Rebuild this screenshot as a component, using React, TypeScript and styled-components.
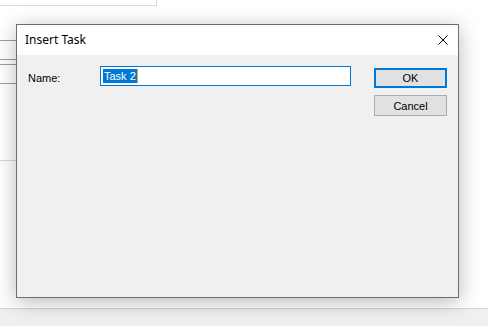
import React from "react";
import styled, {createGlobalStyle} from "styled-components";

const GlobalStyle = createGlobalStyle`
  html, body {
    margin: 0;
    padding: 0;
    background: #ffffff;
  }
`;

const Page = styled.div`
  position: relative;
  display: flex;
  flex-direction: column;
  width: 488px;
  height: 326px;
  overflow: hidden;
  background: #ffffff;
`;

const TopPanel = styled.div`
  width: 156px;
  height: 5px;
  border-right: 1px solid #dadada;
  border-bottom: 1px solid #dadada;
`;

const Rule = styled.div<{ $gap: number; $light?: boolean }>`
  width: 240px;
  margin-top: ${(p) => p.$gap}px;
  border-top: 1px solid ${(p) => (p.$light ? "#d6d6d6" : "#a0a0a0")};
`;

const Filler = styled.div`
  flex: 1;
`;

const StatusBar = styled.div`
  height: 17px;
  border-top: 1px solid #d4d4d4;
  background: #f0f0f0;
`;

const Dialog = styled.div`
  position: absolute;
  left: 16px;
  top: 24px;
  width: 443px;
  height: 274px;
  box-sizing: border-box;
  border: 1px solid #6e6e6e;
  background: #f0f0f0;
  box-shadow: 0 4px 20px rgba(0, 0, 0, 0.28);
  display: flex;
  flex-direction: column;
`;

const TitleBar = styled.div`
  height: 30px;
  background: #ffffff;
  display: flex;
  align-items: center;
  justify-content: space-between;
  padding: 0 10px 0 8px;
  font-family: "Noto Sans", "Open Sans", sans-serif;
  font-size: 12px;
  color: #000000;
`;

const Title = styled.span`
  padding-bottom: 1px;
`;

const CloseIcon = styled.svg`
  width: 10px;
  height: 10px;
  display: block;
`;

const Body = styled.div`
  flex: 1;
  display: flex;
  padding: 11px 11px 0 11px;
  font-family: "Liberation Sans", Arial, sans-serif;
  font-size: 11px;
  color: #000000;
`;

const FieldRow = styled.div`
  display: flex;
  align-items: flex-start;
`;

const Label = styled.label`
  width: 72px;
  line-height: 20px;
  padding-top: 2px;
`;

const TextBox = styled.div`
  width: 251px;
  height: 20px;
  box-sizing: border-box;
  border: 1px solid #0078d7;
  background: #ffffff;
  display: flex;
  align-items: center;
  padding-left: 2px;
`;

const Selection = styled.span`
  background: #0078d7;
  color: #ffffff;
  line-height: 14px;
  padding: 0 1px;
`;

const Caret = styled.span`
  width: 1px;
  height: 14px;
  background: #f7a030;
`;

const ButtonColumn = styled.div`
  display: flex;
  flex-direction: column;
  gap: 7px;
  margin-left: 23px;
  padding-top: 2px;
`;

const Button = styled.button<{ $default?: boolean }>`
  width: 73px;
  height: ${(p) => (p.$default ? 20 : 21)}px;
  box-sizing: border-box;
  margin: 0;
  padding: 0;
  background: #e1e1e1;
  border: ${(p) => (p.$default ? "2px solid #0078d7" : "1px solid #adadad")};
  font-family: "Liberation Sans", Arial, sans-serif;
  font-size: 11px;
  color: #000000;
`;

export default function App() {
  return (
    <Page>
      <GlobalStyle />
      <TopPanel />
      <Rule $gap={34} />
      <Rule $gap={18} />
      <Rule $gap={4} />
      <Rule $gap={18} />
      <Rule $gap={76} $light />
      <Filler />
      <StatusBar />

      <Dialog>
        <TitleBar>
          <Title>Insert Task</Title>
          <CloseIcon viewBox="0 0 10 10">
            <path d="M0.5 0.5 L9.5 9.5 M9.5 0.5 L0.5 9.5" stroke="#000" strokeWidth="1" />
          </CloseIcon>
        </TitleBar>
        <Body>
          <FieldRow>
            <Label>Name:</Label>
            <TextBox>
              <Selection>Task 2</Selection>
              <Caret />
            </TextBox>
          </FieldRow>
          <ButtonColumn>
            <Button $default>OK</Button>
            <Button>Cancel</Button>
          </ButtonColumn>
        </Body>
      </Dialog>
    </Page>
  );
}
